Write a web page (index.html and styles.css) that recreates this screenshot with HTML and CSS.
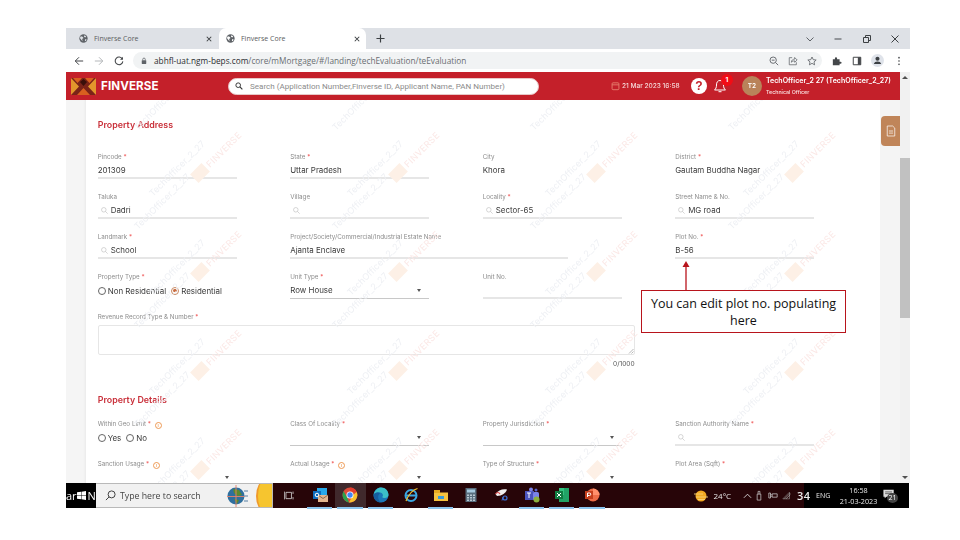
FILE: index.html
```html
<!DOCTYPE html>
<html lang="en">
<head>
<meta charset="utf-8">
<title>Finverse Core</title>
<link rel="stylesheet" href="styles.css">
</head>
<body>
<div class="window">
  <div class="tabstrip">
    <div class="tab">
      <svg class="fav" viewBox="0 0 10 10"><circle cx="5" cy="5" r="4.6" fill="#5f6368"/><path d="M2 2.500l2 .5 1 1.500-1.500 1 .5 2.500L2.500 6.500 1 4.500zM6 1.500l2 1-1 1.500-1.500-1zM7 5.500l1.500.5-1 2-1-.5z" fill="#dee1e6"/></svg>
      <span class="tabtitle">Finverse Core</span>
      <svg class="tabx" viewBox="0 0 8 8"><path d="M1 1l6 6M7 1L1 7" stroke="#3c4043" stroke-width="1.400"/></svg>
    </div>
    <div class="tab tab-active">
      <svg class="fav" viewBox="0 0 10 10"><circle cx="5" cy="5" r="4.6" fill="#5f6368"/><path d="M2 2.500l2 .5 1 1.500-1.500 1 .5 2.500L2.500 6.500 1 4.500zM6 1.500l2 1-1 1.500-1.500-1zM7 5.500l1.500.5-1 2-1-.5z" fill="#fff"/></svg>
      <span class="tabtitle">Finverse Core</span>
      <svg class="tabx" viewBox="0 0 8 8"><path d="M1 1l6 6M7 1L1 7" stroke="#3c4043" stroke-width="1.400"/></svg>
    </div>
    <svg class="newtab" viewBox="0 0 10 10"><path d="M5 .5v9M.5 5h9" stroke="#3c4043" stroke-width="1.300"/></svg>
    <div class="winctl">
      <svg viewBox="0 0 10 10"><path d="M1.500 3.500L5 7l3.500-3.500" fill="none" stroke="#5f6368"/></svg>
      <svg viewBox="0 0 10 10"><path d="M1.500 5h7" stroke="#5f6368" stroke-width="1.200"/></svg>
      <svg viewBox="0 0 10 10"><path d="M1.500 3.500h5v5h-5zM3.500 3.500v-2h5v5h-2" fill="none" stroke="#3c4043"/></svg>
      <svg viewBox="0 0 10 10"><path d="M1.500 1.500l7 7M8.500 1.500l-7 7" stroke="#3c4043"/></svg>
    </div>
  </div>
  <div class="toolbar">
    <svg class="navicon" viewBox="0 0 12 12"><path d="M11 6H1.500M6 1.500L1.500 6 6 10.500" fill="none" stroke="#44474a" stroke-width="1.200"/></svg>
    <svg class="navicon" viewBox="0 0 12 12"><path d="M1 6h9.500M6 1.500L10.500 6 6 10.500" fill="none" stroke="#b4b7ba" stroke-width="1.200"/></svg>
    <svg class="navicon" viewBox="0 0 12 12"><path d="M10 3.500A4.600 4.600 0 1 0 10.600 6.500" fill="none" stroke="#44474a" stroke-width="1.300"/><path d="M10.700 1v3.500H7.200z" fill="#44474a"/></svg>
    <div class="omnibox">
      <svg class="lock" viewBox="0 0 8 10"><rect x="1" y="4" width="6" height="5" rx=".6" fill="#5f6368"/><path d="M2.300 4V2.800a1.700 1.700 0 0 1 3.400 0V4" fill="none" stroke="#5f6368"/></svg>
      <span class="url"><b>abhfl-uat.ngm-beps.com</b>/core/mMortgage/#/landing/techEvaluation/teEvaluation</span>
      <div class="omni-actions">
        <svg viewBox="0 0 12 12"><circle cx="5" cy="5" r="3.800" fill="none" stroke="#5f6368" stroke-width="1.100"/><path d="M8 8l3 3M3.300 5h3.400" stroke="#5f6368" stroke-width="1.100"/></svg>
        <svg viewBox="0 0 12 12"><path d="M5 2H1.500v8.500H10V7.500M4 7.500C4 5 6 3.800 8 3.800V1.800L11 4.800 8 7.500V5.800C6.500 5.800 5 6.300 4 7.500z" fill="none" stroke="#5f6368" stroke-width=".9"/></svg>
        <svg viewBox="0 0 12 12"><path d="M6 1.200l1.500 3.200 3.500.4-2.600 2.300.7 3.500L6 8.800l-3.100 1.800.7-3.500L1 4.800l3.500-.4z" fill="none" stroke="#5f6368"/></svg>
      </div>
    </div>
    <div class="extensions">
      <svg viewBox="0 0 12 12"><path d="M1 4h2.500V2.800a1.300 1.300 0 0 1 2.600 0V4h3v2.800h1.100a1.300 1.300 0 0 1 0 2.600H9.100V11H1z" fill="#44474a"/></svg>
      <svg viewBox="0 0 12 12"><path d="M1.500 1.500h9v9h-9z" fill="none" stroke="#44474a" stroke-width="1.200"/><path d="M7 1.500h3.500v9H7z" fill="#44474a"/></svg>
      <svg class="avatar-chrome" viewBox="0 0 14 14"><circle cx="7" cy="7" r="7" fill="#dfe3ea"/><circle cx="7" cy="5.200" r="2.200" fill="#3c4043"/><path d="M3 10.800c.5-2 2-2.800 4-2.800s3.500.8 4 2.800z" fill="#3c4043"/></svg>
      <svg viewBox="0 0 12 12"><circle cx="6" cy="2" r="1" fill="#44474a"/><circle cx="6" cy="6" r="1" fill="#44474a"/><circle cx="6" cy="10" r="1" fill="#44474a"/></svg>
    </div>
  </div>
  <div class="viewport">
    <div class="page">
      <header class="apphead">
        <svg class="logo" viewBox="0 0 25 17"><rect width="25" height="17" fill="#7b2318"/><path d="M0 0l8 8.500L0 17zM25 0l-8 8.500 8 8.500z" fill="#e3962c"/><path d="M2 0h9L6.500 5zM14 0h9l-4.500 5zM6 17l6.500-7 6.500 7z" fill="#d9601f"/><path d="M9 4l3.500 4L16 4l-3.500-3z" fill="#3a0f0a"/></svg>
        <span class="brand">FINVERSE</span>
        <div class="appsearch">
          <svg viewBox="0 0 10 10"><circle cx="4" cy="4" r="2.900" fill="none" stroke="#333" stroke-width="1.200"/><path d="M6.200 6.200L9.200 9.200" stroke="#333" stroke-width="1.400"/></svg>
          <span>Search (Application Number,Finverse ID, Applicant Name, PAN Number)</span>
        </div>
        <svg class="calendar" viewBox="0 0 10 10"><rect x="1.200" y="1.500" width="7.600" height="7.600" rx="1" fill="none" stroke="#e8816f"/><path d="M1.200 3.700h7.600" stroke="#e8816f"/></svg>
        <span class="stamp">21 Mar 2023 16:58</span>
        <div class="help">?</div>
        <div class="bell">
          <svg viewBox="0 0 14 16"><path d="M7 2.500C4.500 2.500 3.500 4.500 3.500 7c0 2.500-.8 4-2 5h11c-1.200-1-2-2.500-2-5 0-2.500-1-4.500-3.500-4.500zM5.500 13.700h3" fill="none" stroke="#fff"/></svg>
          <span class="bell-badge">1</span>
        </div>
        <div class="avatar">T2</div>
        <div class="user">
          <span class="user-name">TechOfficer_2 27 (TechOfficer_2_27)</span>
          <span class="user-role">Technical Officer</span>
        </div>
      </header>
      <div class="main">
        <div class="gutter-left"></div>
        <div class="card">
          <h2 class="section-title">Property Address</h2>
          <div class="grid">
            <div class="field"><label>Pincode <i>*</i></label><div class="control">201309</div></div>
            <div class="field"><label>State <i>*</i></label><div class="control">Uttar Pradesh</div></div>
            <div class="field"><label>City</label><div class="control plain">Khora</div></div>
            <div class="field"><label>District <i>*</i></label><div class="control plain">Gautam Buddha Nagar</div></div>

            <div class="field"><label>Taluka</label><div class="control"><svg class="mag" viewBox="0 0 8 8"><circle cx="3.200" cy="3.200" r="2.600" fill="none" stroke="#bbb" stroke-width=".7"/><path d="M5.200 5.200L7.600 7.600" stroke="#bbb" stroke-width=".7"/></svg>Dadri</div></div>
            <div class="field"><label>Village</label><div class="control"><svg class="mag" viewBox="0 0 8 8"><circle cx="3.200" cy="3.200" r="2.600" fill="none" stroke="#bbb" stroke-width=".7"/><path d="M5.200 5.200L7.600 7.600" stroke="#bbb" stroke-width=".7"/></svg></div></div>
            <div class="field"><label>Locality <i>*</i></label><div class="control"><svg class="mag" viewBox="0 0 8 8"><circle cx="3.200" cy="3.200" r="2.600" fill="none" stroke="#bbb" stroke-width=".7"/><path d="M5.200 5.200L7.600 7.600" stroke="#bbb" stroke-width=".7"/></svg>Sector-65</div></div>
            <div class="field"><label>Street Name &amp; No.</label><div class="control"><svg class="mag" viewBox="0 0 8 8"><circle cx="3.200" cy="3.200" r="2.600" fill="none" stroke="#bbb" stroke-width=".7"/><path d="M5.200 5.200L7.600 7.600" stroke="#bbb" stroke-width=".7"/></svg>MG road</div></div>

            <div class="field"><label>Landmark <i>*</i></label><div class="control"><svg class="mag" viewBox="0 0 8 8"><circle cx="3.200" cy="3.200" r="2.600" fill="none" stroke="#bbb" stroke-width=".7"/><path d="M5.200 5.200L7.600 7.600" stroke="#bbb" stroke-width=".7"/></svg>School</div></div>
            <div class="field field-wide"><label>Project/Society/Commercial/Industrial Estate Name</label><div class="control">Ajanta Enclave</div></div>
            <div class="field"><label>Plot No. <i>*</i></label><div class="control">B-56</div></div>

            <div class="field"><label>Property Type <i>*</i></label><div class="radios"><span class="radio"></span>Non Residential<span class="radio radio-on"></span>Residential</div></div>
            <div class="field"><label>Unit Type <i>*</i></label><div class="control select">Row House<span class="caret"></span></div></div>
            <div class="field"><label>Unit No.</label><div class="control"></div></div>
          </div>
          <div class="revenue">
            <label>Revenue Record Type &amp; Number <i>*</i></label>
            <div class="textarea">
              <svg class="grip" viewBox="0 0 6 6"><path d="M5.500 1L1 5.500M5.500 3.500L3.500 5.500" stroke="#888" stroke-width=".6"/></svg>
            </div>
            <div class="counter">0/1000</div>
          </div>
          <h2 class="section-title section-second">Property Details</h2>
          <div class="grid">
            <div class="field"><label>Within Geo Limit <i>*</i> <span class="info">i</span></label><div class="radios"><span class="radio"></span>Yes<span class="radio radio-tight"></span>No</div></div>
            <div class="field"><label>Class Of Locality <i>*</i></label><div class="control select"><span class="caret"></span></div></div>
            <div class="field"><label>Property Jurisdiction <i>*</i></label><div class="control select"><span class="caret"></span></div></div>
            <div class="field"><label>Sanction Authority Name <i>*</i></label><div class="control"><svg class="mag" viewBox="0 0 8 8"><circle cx="3.200" cy="3.200" r="2.600" fill="none" stroke="#bbb" stroke-width=".7"/><path d="M5.200 5.200L7.600 7.600" stroke="#bbb" stroke-width=".7"/></svg></div></div>

            <div class="field"><label>Sanction Usage <i>*</i> <span class="info">i</span></label><div class="control select"><span class="caret"></span></div></div>
            <div class="field"><label>Actual Usage <i>*</i> <span class="info">i</span></label><div class="control select"><span class="caret"></span></div></div>
            <div class="field"><label>Type of Structure <i>*</i></label><div class="control select"><span class="caret"></span></div></div>
            <div class="field"><label>Plot Area (Sqft) <i>*</i></label><div class="control"></div></div>
          </div>
          <svg class="watermark" aria-hidden="true">
            <defs>
              <pattern id="wm" width="198" height="99" patternUnits="userSpaceOnUse">
                <text class="wm-user" transform="translate(67 97) rotate(-45)">TechOfficer_2_27</text>
                <text class="wm-user" transform="translate(52 31) rotate(-45)">TechOfficer_2_27</text>
                <text class="wm-user" transform="translate(52 130) rotate(-45)">TechOfficer_2_27</text>
                <rect class="wm-logo" x="-8" y="-6" width="16" height="12" transform="translate(114 73) rotate(-45)"/>
                <text class="wm-brand" transform="translate(124 68) rotate(-45)">FINVERSE</text>
              </pattern>
            </defs>
            <rect width="100%" height="100%" fill="url(#wm)"/>
          </svg>
        </div>
        <div class="gutter-right">
          <div class="doc-tab">
            <svg viewBox="0 0 12 14"><path d="M1.500 1h6.500l2.500 2.500V13h-9z" fill="none" stroke="#fff" stroke-opacity=".85"/><path d="M3.500 7h5M3.500 9.500h5" stroke="#fff" stroke-opacity=".85"/></svg>
          </div>
        </div>
      </div>
    </div>
    <div class="scrollbar">
      <span class="sb-up"></span>
      <div class="sb-thumb"></div>
      <span class="sb-down"></span>
    </div>
  </div>
  <footer class="taskbar">
    <div class="start"><span>ar</span><svg viewBox="0 0 10 10"><path d="M0 1.500l4.500-.7v4H0zM5 .7L10 0v4.800H5zM0 5.300h4.500v4L0 8.600zM5 5.300h5V10l-5-.7z" fill="#fff"/></svg><span>N</span></div>
    <div class="tb-search">
      <svg class="tb-mag" viewBox="0 0 12 12"><circle cx="7.200" cy="4.800" r="3.800" fill="none" stroke="#333"/><path d="M4.400 7.600L1 11" stroke="#333"/></svg>
      <span>Type here to search</span>
      <svg class="tb-globe" viewBox="0 0 24 24"><circle cx="9" cy="12" r="8.500" fill="#2f6f9e"/><path d="M6 5l6 1 3 5-5 1-3-3zM7 15l5 1-2 4z" fill="#5b8a2d"/><path d="M9 1v22M0 12.500h18" stroke="#e8826a" stroke-width=".9"/><path d="M21 7h-4M21 12h-4M21 17h-4" stroke="#8aa5bd" stroke-width="1.500"/></svg>
      <span class="tb-sun"></span>
    </div>
    <div class="tb-apps">
      <div class="tb-snap"><svg viewBox="0 0 14 14"><path d="M2.500 3h7v8h-7zM.5 2v10M11.500 2v3M11.500 9v3" fill="none" stroke="#ddd"/></svg></div>
      <div class="tb-app tb-on"><svg viewBox="0 0 16 16"><rect x="5" y="1" width="10" height="10" fill="#28a8ea"/><rect x="1" y="4" width="8" height="8" fill="#0f6cbd"/><rect x="6" y="8" width="10" height="7" fill="#e2b58f"/><path d="M6 8l5 3.500L16 8" fill="none" stroke="#8d6a4c"/><circle cx="5" cy="8" r="1.800" fill="none" stroke="#fff"/></svg></div>
      <div class="tb-app tb-on tb-active"><svg viewBox="0 0 16 16"><circle cx="8" cy="8" r="7.500" fill="#dd4b39"/><path d="M8 .5A7.500 7.500 0 0 1 14.700 5H8z" fill="#e53c2e"/><path d="M14.700 5A7.500 7.500 0 0 1 7 15.400L11 8z" fill="#f9c22e"/><path d="M7 15.400A7.500 7.500 0 0 1 1.500 4.300L5 10z" fill="#2aa24c"/><circle cx="8" cy="8" r="3.500" fill="#fff"/><circle cx="8" cy="8" r="2.700" fill="#4285f4"/></svg></div>
      <div class="tb-app tb-on"><svg viewBox="0 0 16 16"><circle cx="8" cy="8" r="7.500" fill="#1b77b8"/><path d="M.5 8C1.500 3 5 .5 8 .5c4.500 0 7.500 3.500 7.500 7.500 0 1.500-1.500 3-4 3-1 0-2-.3-2.300-1 1.300-.8 1.200-4-2.200-4.500C4 5 1.500 6 .5 8z" fill="#3cc0c8"/><path d="M7 6.500c-2 1-3 5 .5 9C3 15.500.5 11.500.5 8c1-2 4-3.500 6.500-1.500z" fill="#155e9e"/></svg></div>
      <div class="tb-app"><svg viewBox="0 0 16 16"><circle cx="8" cy="8.500" r="5.500" fill="none" stroke="#3ba6e1" stroke-width="2"/><path d="M3 8.500h10" stroke="#3ba6e1" stroke-width="2"/><path d="M3 14C5 9 9 3 14.500 1.500" fill="none" stroke="#f2c230" stroke-width="1.200"/></svg></div>
      <div class="tb-app tb-on"><svg viewBox="0 0 16 16"><path d="M1 4h5l1 1.500h8V14H1z" fill="#f6c340"/><rect x="1" y="3" width="6" height="3" fill="#e8a920"/><path d="M5 9h6v3H5z" fill="#3a9bd8"/></svg></div>
      <div class="tb-app"><svg viewBox="0 0 16 16"><rect x="2.500" y="1" width="11" height="14" fill="#596d7d"/><rect x="4" y="2.500" width="8" height="3" fill="#a6c9de"/><path d="M4 7.500h2v1.500H4zM7 7.500h2v1.500H7zM10 7.500h2v1.500h-2zM4 10h2v1.500H4zM7 10h2v1.500H7zM10 10h2v1.500h-2zM4 12.500h2v1.500H4zM7 12.500h2v1.500H7zM10 12.500h2v1.500h-2z" fill="#b8c7d2"/></svg></div>
      <div class="tb-app"><svg viewBox="0 0 16 16"><path d="M1.500 7C4 3 9 1.500 13 2.500 12 6 8 9 3 9z" fill="#eee"/><path d="M1.500 7C3 5 5 5 6 7" fill="none" stroke="#d44" stroke-width="1.200"/><circle cx="11" cy="11" r="2" fill="none" stroke="#3b6fd4" stroke-width="1.200"/><path d="M9 10L8 13.500" stroke="#3b6fd4"/></svg></div>
      <div class="tb-app tb-on"><svg viewBox="0 0 16 16"><rect x="1" y="4" width="9" height="9" fill="#4b53bc"/><rect x="9" y="5" width="6" height="8" rx="1.500" fill="#7b83eb"/><circle cx="7" cy="2.500" r="2" fill="#7b83eb"/><circle cx="12" cy="3" r="1.500" fill="#5b63c9"/><circle cx="12.500" cy="12.500" r="3" fill="#8bb13e"/><path d="M3 6h4M5 6v5" stroke="#fff"/></svg></div>
      <div class="tb-app tb-on"><svg viewBox="0 0 16 16"><rect x="5" y="1" width="10" height="14" fill="#21a366"/><rect x="5" y="1" width="5" height="7" fill="#33c481"/><rect x="1" y="4" width="8" height="8" fill="#107c41"/><path d="M3 6l4 4M7 6l-4 4" stroke="#fff"/></svg></div>
      <div class="tb-app tb-on"><svg viewBox="0 0 16 16"><circle cx="9" cy="8" r="6.500" fill="#ed6c47"/><path d="M9 1.500A6.500 6.500 0 0 1 15.500 8H9z" fill="#ff8f6b"/><rect x="1" y="4" width="8" height="8" fill="#c43e1c"/><path d="M3.500 10V6h2a1.200 1.200 0 0 1 0 2.500h-2" fill="none" stroke="#fff"/></svg></div>
    </div>
    <div class="tray">
      <svg class="tr-sun" viewBox="0 0 16 12"><circle cx="8" cy="6" r="5.500" fill="#f3a922"/><path d="M1 4h9M3 7h12M5 9.500h7" stroke="#f7d27c" stroke-width=".9"/></svg>
      <span class="tr-temp">24°C</span>
      <svg class="tr-up" viewBox="0 0 10 6"><path d="M1 5l4-4 4 4" fill="none" stroke="#ddd"/></svg>
      <svg class="tr-ic" viewBox="0 0 10 12"><path d="M3 4.500h4V11H3zM4 4.500V1.500h2v3" fill="none" stroke="#ccc" stroke-width=".8"/></svg>
      <svg class="tr-ic" viewBox="0 0 12 12"><path d="M1 3h2v6H1zM5 4h6v4H5z" fill="none" stroke="#ccc" stroke-width=".9"/><path d="M3 5h2M3 7h2" stroke="#ccc" stroke-width=".7"/></svg>
      <svg class="tr-ic" viewBox="0 0 12 12"><path d="M1 10L9 2v8z" fill="none" stroke="#999" stroke-width=".7"/><path d="M3 10L10 3M5 10l5-5" stroke="#bbb" stroke-width=".7"/></svg>
    </div>
    <div class="clockbar">
      <span class="tr-34">34</span>
      <span class="tr-eng">ENG</span>
      <div class="clock"><span>16:58</span><span>21-03-2023</span></div>
      <div class="notif"><svg viewBox="0 0 14 12"><path d="M.5.500h12v8H4l-2 2v-2H.5z" fill="#ddd"/><path d="M2.500 3h8M2.500 5h8" stroke="#333" stroke-width=".8"/></svg><span>21</span></div>
    </div>
  </footer>
  <div class="callout-arrow"><svg viewBox="0 0 8 30"><path d="M4 29.500V5" stroke="#b8141c" stroke-width="1.300"/><path d="M4 0l3.500 6h-7z" fill="#b8141c"/></svg></div>
  <div class="callout">You can edit plot no. populating here</div>
</div>
</body>
</html>
```

FILE: styles.css
```css
* { box-sizing: border-box; }
html, body { margin: 0; padding: 0; background: #fff; }
body { width: 960px; height: 540px; padding: 28px 50px 32px 66px; overflow: hidden; font-family: "Inter", "Liberation Sans", sans-serif; }

.window { position: relative; width: 844px; height: 480px; display: flex; flex-direction: column; filter: blur(.35px); }

/* Browser tab strip */
.tabstrip { height: 21px; background: #dee1e6; display: flex; align-items: stretch; flex: none; }
.tab { width: 153px; display: flex; align-items: center; padding: 0 6px 0 13px; font: 7px "Open Sans", sans-serif; color: #5a5d61; }
.tab-active { width: 147px; background: #fff; border-radius: 7px 7px 0 0; padding: 0 5px 0 7px; }
.fav { width: 9px; height: 9px; margin-right: 6px; flex: none; }
.tabtitle { flex: 1; }
.tabx { width: 6px; height: 6px; flex: none; margin-right: 1px; }
.newtab { width: 9px; height: 9px; margin: 6px 0 0 10px; }
.winctl { margin-left: auto; display: flex; align-items: center; gap: 18.500px; padding-right: 10px; }
.winctl svg { width: 10px; height: 10px; }

/* Browser toolbar */
.toolbar { height: 23px; background: #fff; display: flex; align-items: center; flex: none; padding-left: 8px; }
.navicon { width: 10px; height: 10px; margin-right: 10px; flex: none; }
.navicon:nth-of-type(3) { margin-right: 9px; }
.omnibox { width: 689px; height: 17px; border-radius: 9px; background: #f1f3f4; display: flex; align-items: center; padding-left: 8px; flex: none; }
.lock { width: 6px; height: 8px; flex: none; margin-right: 7px; }
.url { font: 8.280px "Open Sans", sans-serif; color: #6a6e72; white-space: nowrap; }
.url b { font-weight: 400; color: #2b2d30; }
.omni-actions { margin-left: auto; display: flex; gap: 9px; padding-right: 5px; }
.omni-actions svg { width: 10px; height: 10px; }
.extensions { display: flex; align-items: center; padding-left: 10px; gap: 9.500px; }
.extensions svg { width: 10px; height: 10px; }
.extensions .avatar-chrome { width: 13px; height: 13px; }

/* Page viewport */
.viewport { flex: 1; min-height: 0; display: flex; }
.page { width: 834px; display: flex; flex-direction: column; }
.apphead { height: 28px; background: #c4202a; flex: none; display: flex; align-items: center; padding-left: 5px; color: #fff; }
.logo { width: 25px; height: 17px; flex: none; margin-right: 5px; }
.brand { width: 127px; font: 700 11.600px "Inter", sans-serif; letter-spacing: .1px; }
.appsearch { width: 311px; height: 17px; background: #fff; border-radius: 9px; display: flex; align-items: center; padding-left: 6px; font: 400 8.070px "Roboto", sans-serif; color: #8b8b8b; white-space: nowrap; flex: none; border: 1px solid #e8c8c8; }
.appsearch svg { width: 8px; height: 8px; margin-right: 7px; flex: none; }
.calendar { width: 9px; height: 10px; margin-left: 72px; flex: none; }
.stamp { margin-left: 2px; font: 500 6.550px "Inter", sans-serif; color: #f5d9d9; width: 58px; white-space: nowrap; }
.help { width: 16px; height: 16px; border-radius: 50%; background: #fff; color: #c4202a; font: 700 12px/16px "Liberation Sans", sans-serif; text-align: center; margin-left: 11px; flex: none; }
.bell { position: relative; width: 14px; height: 16px; margin-left: 6px; flex: none; }
.bell svg { width: 14px; height: 16px; display: block; }
.bell-badge { position: absolute; left: 8px; top: -4px; width: 12px; height: 12px; border-radius: 50%; background: #f20d16; color: #fff; font: 700 6.500px/12px "Inter", sans-serif; text-align: center; }
.avatar { width: 20px; height: 20px; border-radius: 50%; background: #b9835a; color: #fff; font: 600 6.500px/20px "Inter", sans-serif; text-align: center; margin-left: 15px; flex: none; }
.user { margin-left: 4px; display: flex; flex-direction: column; gap: 2px; white-space: nowrap; }
.user-name { font: 600 7.050px/10px "Inter", sans-serif; }
.user-role { font: 500 5.300px/8px "Inter", sans-serif; color: #fbe3e3; }

/* Form page */
.main { flex: 1; min-height: 0; display: flex; overflow: hidden; }
.gutter-left { width: 20px; background: #f5f5f5; box-shadow: inset -2px 0 2px -1px #e9e9e9; flex: none; }
.card { position: relative; width: 794px; background: #fff; flex: none; padding: 19px 0 0 11.700px; overflow: hidden; }
.gutter-right { width: 20px; background: #f4f4f4; flex: none; padding-top: 16px; padding-left: 1px; }
.doc-tab { width: 19px; height: 30px; background: #c08559; border-radius: 4px 0 0 4px; display: flex; align-items: center; justify-content: center; }
.doc-tab svg { width: 10px; height: 12px; }

.section-title { margin: 0 0 21px; font: 600 8.900px/12px "Inter", sans-serif; color: #c9303a; }
.section-second { margin: 24px 0 13px; }
.grid { display: grid; grid-template-columns: repeat(4, 192.500px); grid-auto-rows: 40px; }
.field { width: 139px; }
.field-wide { width: 278px; grid-column: span 2; }
.field-wide + .field { grid-column: 4; }
label { display: block; height: 10px; font: 400 6.250px/10px "Inter", sans-serif; color: #8c8c8c; white-space: nowrap; }
label i { color: #ee4b4b; font-style: normal; }
.control { position: relative; height: 17px; border-bottom: 2px solid #e6e6e6; display: flex; align-items: center; font: 400 7.950px "Inter", sans-serif; color: #3a3a3a; padding-top: 1px; white-space: nowrap; }
.control.plain { border-bottom-color: #fff; }
.select { border-bottom: 1px solid #c8c8c8; padding-top: 0; }
.mag { width: 7px; height: 7px; margin: 0 3px 0 3px; flex: none; }
.caret { position: absolute; right: 8px; top: 7px; border: 2px solid transparent; border-top: 3px solid #555; border-bottom: 0; }
.radios { height: 17px; display: flex; align-items: center; font: 400 7.950px "Inter", sans-serif; color: #3a3a3a; white-space: nowrap; }
.radio { width: 8px; height: 8px; border: 1px solid #666; border-radius: 50%; margin: 0 2px 0 0; flex: none; position: relative; }
.radio + .radio, .radios .radio:nth-of-type(2) { margin-left: 5px; }
.radio-on { border-color: #c88a64; }
.radio-on::after { content: ""; position: absolute; inset: 1.200px; border-radius: 50%; background: #c96a3d; }
.info { display: inline-block; width: 7px; height: 7px; border: 1px solid #ee9a55; border-radius: 50%; color: #ee9a55; font: 500 5px/5px "Inter", sans-serif; text-align: center; margin-left: 2px; vertical-align: -1px; }

.revenue { height: 58px; width: 537px; }
.revenue label { margin-bottom: 3px; }
.textarea { position: relative; height: 30px; border: 1px solid #e6e6e6; border-radius: 2px; }
.grip { position: absolute; right: 0; bottom: 0; width: 6px; height: 6px; }
.counter { text-align: right; font: 400 6.600px/12px "Inter", sans-serif; color: #555; margin-top: 3px; }

.watermark { position: absolute; inset: 0; width: 100%; height: 100%; pointer-events: none; }
.wm-user { font: 400 9px "Inter", sans-serif; fill: #eef0f4; }
.wm-brand { font: 400 9px "Inter", sans-serif; letter-spacing: .3px; fill: #fbe8e6; }
.wm-logo { fill: #fdf0e6; }

/* Scrollbar */
.scrollbar { width: 10px; background: #f1f1f1; display: flex; flex-direction: column; align-items: center; flex: none; }
.sb-up { margin-top: 4px; border: 3px solid transparent; border-bottom: 3px solid #505050; border-top: 0; }
.sb-thumb { width: 10px; height: 160px; background: #c1c1c1; margin-top: 79px; }
.sb-down { margin-top: auto; margin-bottom: 4px; border: 3px solid transparent; border-top: 3px solid #505050; border-bottom: 0; }

/* Windows taskbar */
.taskbar { height: 25px; background: #270508; flex: none; display: flex; align-items: stretch; color: #e8e8e8; position: relative; width: 843px; }
.start { width: 30px; background: #000; flex: none; display: flex; align-items: center; font: 400 11px "Open Sans", sans-serif; color: #fff; overflow: hidden; white-space: nowrap; }
.start svg { width: 9px; height: 9px; margin: 0 2px 0 0; flex: none; }
.tb-search { width: 177px; background: #f1f1f1; border: 1px solid #b9b9b9; border-left-width: 0; flex: none; display: flex; align-items: center; padding-left: 9px; font: 400 8.750px "Open Sans", sans-serif; color: #444; overflow: hidden; white-space: nowrap; }
.tb-mag { width: 11px; height: 11px; flex: none; margin-right: 4px; }
.tb-globe { width: 24px; height: 24px; flex: none; margin-left: 26px; }
.tb-sun { width: 16px; height: 30px; margin-left: auto; flex: none; border-radius: 50% 0 0 50%; background: #f6c52f; border-left: 2px solid #ef9a2b; }
.tb-apps { display: flex; flex: none; }
.tb-snap { width: 32px; display: flex; align-items: center; justify-content: center; }
.tb-snap svg { width: 11px; height: 11px; }
.tb-app { width: 30.250px; display: flex; align-items: center; justify-content: center; border-bottom: 1.500px solid transparent; }
.tb-app svg { width: 16px; height: 16px; }
.tb-on { position: relative; }
.tb-on::after { content: ""; position: absolute; left: 2px; right: 3px; bottom: -1.500px; height: 1.500px; background: #8cc5ef; }
.tb-active { background: #40292c; }
.tray { flex: 1; display: flex; align-items: center; padding-left: 85px; }
.tr-sun { width: 16px; height: 12px; flex: none; }
.tr-temp { margin-left: 5px; font: 400 8px "Open Sans", sans-serif; width: 26px; }
.tr-up { width: 9px; height: 6px; flex: none; margin-left: 3px; }
.tr-ic { width: 10px; height: 11px; flex: none; margin-left: 4px; }
.tr-up + .tr-ic { margin-left: 2px; }
.clockbar { width: 105px; background: #000; flex: none; display: flex; align-items: center; }
.tr-34 { margin-left: -7px; font: 600 11px "Open Sans", sans-serif; color: #eee; width: 20px; letter-spacing: .5px; }
.tr-eng { font: 400 7px "Open Sans", sans-serif; margin-left: -1px; width: 20px; }
.clock { display: flex; flex-direction: column; align-items: center; width: 43px; font: 400 7.200px/11px "Open Sans", sans-serif; margin-left: 1px; }
.notif { position: relative; margin-left: 3px; width: 14px; height: 13px; }
.notif svg { width: 12px; height: 11px; display: block; }
.notif span { position: absolute; left: 4px; top: 4px; width: 11px; height: 10px; border-radius: 50%; background: #444; font: 400 7px/10px "Open Sans", sans-serif; text-align: center; color: #fff; }

/* Slide annotation on top of the screenshot */
.callout { position: absolute; left: 575px; top: 262px; width: 205px; height: 43px; background: #fff; border: 1.500px solid #b8141c; display: flex; align-items: center; justify-content: center; text-align: center; padding: 0 8px; font: 400 12.500px/17px "Open Sans", sans-serif; color: #111; }
.callout-arrow { position: absolute; left: 616px; top: 233px; width: 8px; height: 30px; }
.callout-arrow svg { width: 8px; height: 30px; display: block; }
```
